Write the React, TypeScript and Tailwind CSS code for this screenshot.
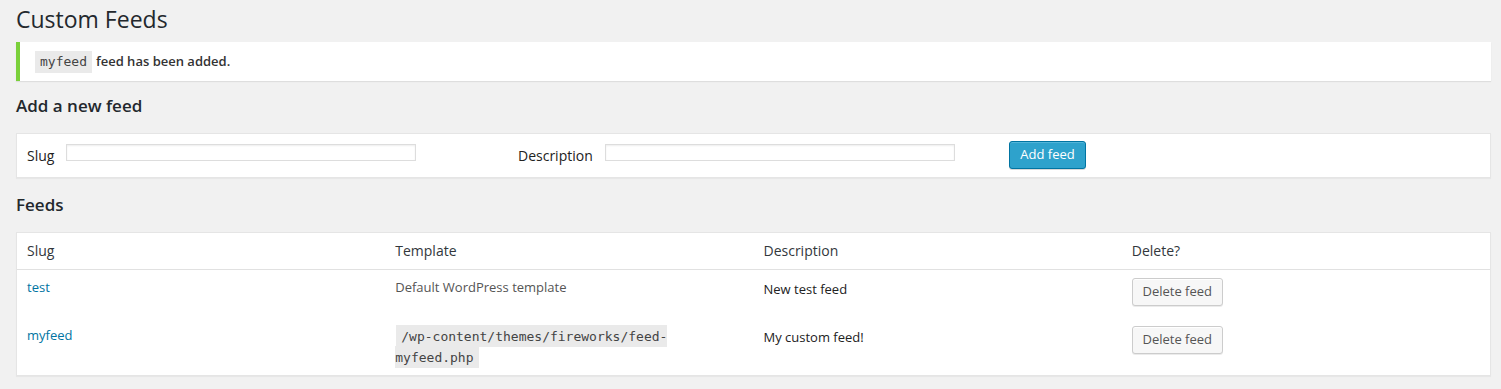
import { useState } from 'react';

type Feed = {
  slug: string;
  template: string;
  isFile: boolean;
  description: string;
};

const feeds: Feed[] = [
  { slug: 'test', template: 'Default WordPress template', isFile: false, description: 'New test feed' },
  { slug: 'myfeed', template: '/wp-content/themes/fireworks/feed-myfeed.php', isFile: true, description: 'My custom feed!' },
];

const sans = "font-['Open_Sans',_'Liberation_Sans',_sans-serif]";
const mono = "font-['DejaVu_Sans_Mono',_'Liberation_Mono',_monospace]";

export default function App() {
  const [slug, setSlug] = useState('');
  const [description, setDescription] = useState('');

  return (
    <div className={`min-h-screen bg-[#f1f1f1] pl-4 pr-[10px] pt-[5px] text-[#444] ${sans}`}>
      <h1 className="text-[23px] leading-[29px] font-normal text-[#23282d]">Custom Feeds</h1>

      {/* Notice */}
      <div className="mt-2 flex h-[39px] items-center border-l-4 border-[#7ad03a] bg-white pl-[15px] shadow-[0_1px_1px_rgba(0,0,0,0.08)]">
        <code className={`inline-block h-[22px] bg-[#eaeaea] px-[5px] text-[13px] leading-[22px] text-[#444] ${mono}`}>myfeed</code>
        <span className="ml-1 text-[13px] font-semibold text-[#333]">feed has been added.</span>
      </div>

      <h2 className="mt-[13px] text-[17px] leading-6 font-semibold text-[#23282d]">Add a new feed</h2>

      {/* Add form */}
      <div className="mt-[15px] h-[45px] border border-[#e5e5e5] bg-white pl-[10px] shadow-[0_1px_1px_rgba(0,0,0,0.04)]">
        <div className="grid grid-cols-[491px_491px_auto] items-start">
          <label className="flex items-start">
            <span className="mt-[12px] text-[14px] leading-5 text-[#222]">Slug</span>
            <input
              value={slug}
              onChange={(e) => setSlug(e.target.value)}
              className="mt-[10px] ml-3 h-[17px] w-[350px] border border-[#ddd] bg-white shadow-[inset_0_1px_2px_rgba(0,0,0,0.07)] outline-none"
            />
          </label>
          <label className="flex items-start">
            <span className="mt-[12px] text-[14px] leading-5 text-[#222]">Description</span>
            <input
              value={description}
              onChange={(e) => setDescription(e.target.value)}
              className="mt-[10px] ml-3 h-[17px] w-[350px] border border-[#ddd] bg-white shadow-[inset_0_1px_2px_rgba(0,0,0,0.07)] outline-none"
            />
          </label>
          <div>
            <button className="mt-[7px] h-[28px] w-[77px] rounded-[3px] border border-[#0074a2] bg-[#2ea2cc] text-[13px] text-white shadow-[inset_0_1px_0_rgba(120,200,230,0.5),0_1px_0_rgba(0,0,0,0.15)]">
              Add feed
            </button>
          </div>
        </div>
      </div>

      <h2 className="mt-[15px] text-[17px] leading-6 font-semibold text-[#23282d]">Feeds</h2>

      {/* Feeds table */}
      <div className="mt-[15px] border border-[#e5e5e5] bg-white shadow-[0_1px_1px_rgba(0,0,0,0.04)]">
        <div className="grid grid-cols-4 border-b border-[#e1e1e1] text-[14px] leading-5 text-[#32373c]">
          <div className="px-[10px] py-2">Slug</div>
          <div className="px-[10px] py-2">Template</div>
          <div className="px-[10px] py-2">Description</div>
          <div className="px-[10px] py-2">Delete?</div>
        </div>
        {feeds.map((feed, i) => (
          <div key={feed.slug} className={`grid grid-cols-4 text-[13px] ${i === 0 ? 'h-[48px]' : ''}`}>
            <div className="px-[10px] pt-2 leading-[19.5px]">
              <a href="#" className="text-[#0074a2]">{feed.slug}</a>
            </div>
            <div className="px-[10px] pt-2 pb-[7px] text-[#555]">
              {feed.isFile ? (
                <div className="w-[280px] leading-5">
                  <code className={`mx-px bg-[#eaeaea] px-[5px] pt-[4px] pb-[3px] text-[13px] text-[#444] [box-decoration-break:slice] ${mono}`}>
                    {feed.template}
                  </code>
                </div>
              ) : (
                <span className="leading-[19.5px]">{feed.template}</span>
              )}
            </div>
            <div className="px-[10px] pt-[10px] leading-[19.5px] text-[#222]">{feed.description}</div>
            <div className="px-[10px] pt-2">
              <button className="h-[28px] w-[91px] rounded-[3px] border border-[#ccc] bg-[#f7f7f7] text-[13px] text-[#555] shadow-[inset_0_1px_0_#fff,0_1px_0_rgba(0,0,0,0.08)]">
                Delete feed
              </button>
            </div>
          </div>
        ))}
      </div>
    </div>
  );
}
